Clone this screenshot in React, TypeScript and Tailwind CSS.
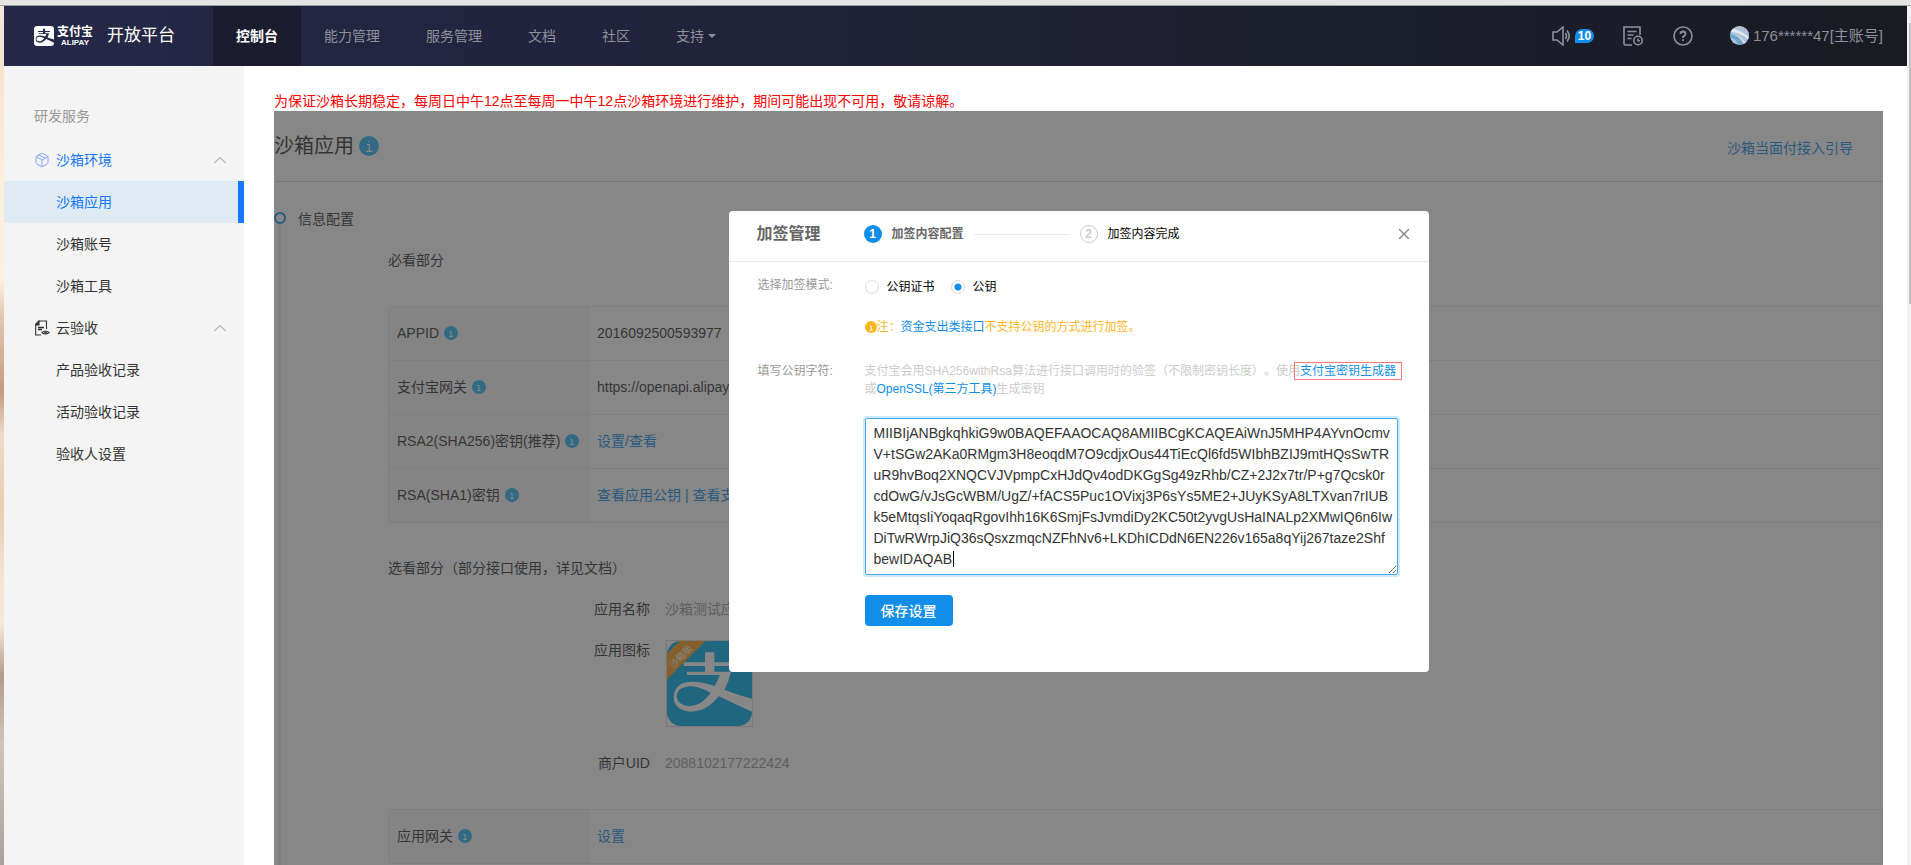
import React, { useState } from 'react';
import { ChevronUp, Package, X } from 'lucide-react';

const DEFAULT_KEY = [
  'MIIBIjANBgkqhkiG9w0BAQEFAAOCAQ8AMIIBCgKCAQEAiWnJ5MHP4AYvnOcmv',
  'V+tSGw2AKa0RMgm3H8eoqdM7O9cdjxOus44TiEcQl6fd5WIbhBZIJ9mtHQsSwTR',
  'uR9hvBoq2XNQCVJVpmpCxHJdQv4odDKGgSg49zRhb/CZ+2J2x7tr/P+g7Qcsk0r',
  'cdOwG/vJsGcWBM/UgZ/+fACS5Puc1OVixj3P6sYs5ME2+JUyKSyA8LTXvan7rIUB',
  'k5eMtqsIiYoqaqRgovIhh16K6SmjFsJvmdiDy2KC50t2yvgUsHaINALp2XMwIQ6n6Iw',
  'DiTwRWrpJiQ36sQsxzmqcNZFhNv6+LKDhICDdN6EN226v165a8qYij267taze2Shf',
  'bewIDAQAB',
].join('\n');

const NAV_ITEMS = ['能力管理', '服务管理', '文档', '社区'];

interface AlipayMarkProps {
  className?: string;
  background: string;
  mark: string;
  children?: React.ReactNode;
}

const AlipayMark: React.FC<AlipayMarkProps> = ({ className, background, mark, children }) => (
  <svg viewBox="0 0 255 255" className={className} aria-hidden="true">
    <rect width="255" height="255" rx="42" className={background} />
    <g className={mark}>
      <path d="M114 34h28v30h62v11h-62v17h50q-6 28-20 54q38 15 83 27v39q-50-22-100-46q-36 46-83 46q-52-2-52-46q4-44 55-44q31 0 68 13q10-18 15-33H60V92h54V75H50V64h64z" />
    </g>
    <path d="M131 156q-32-20-62-20q-38 2-40 30q2 28 38 30q34 0 64-40z" className={background} />
    {children}
  </svg>
);

const InfoIcon: React.FC = () => (
  <span className="inline-flex h-3.5 w-3.5 shrink-0 items-center justify-center rounded-full bg-[#2db7f5]">
    <svg viewBox="0 0 14 14" className="h-3.5 w-3.5" fill="none" stroke="white" strokeWidth="1" aria-hidden="true">
      <path d="M5.500 5.500h1.500v4.500M5.300 10.500h3.600" />
    </svg>
  </span>
);

const Header: React.FC = () => (
  <header className="flex h-[60px] shrink-0 items-center bg-linear-to-r from-[#252848] via-[#1f2135] to-[#181b21] text-sm text-[#8f909c]">
    <a href="#" className="flex w-[209px] shrink-0 items-center pl-[30px] whitespace-nowrap text-white">
      <AlipayMark className="h-5 w-5" background="fill-white" mark="fill-[#252848]" />
      <span className="ml-[3px] flex w-9 flex-col items-center">
        <span className="text-[12px] leading-[13px] font-bold">支付宝</span>
        <span className="text-[8px] leading-[7px] font-bold">ALIPAY</span>
      </span>
      <span className="ml-3.5 text-[17px] leading-6">开放平台</span>
    </a>
    <nav className="flex h-full items-center">
      <a href="#" className="flex h-full items-center bg-[#1b1d2f] px-[23px] font-bold text-white">控制台</a>
      {NAV_ITEMS.map((item) => (
        <a key={item} href="#" className="px-[23px]">{item}</a>
      ))}
      <button className="flex items-center gap-1 px-[23px]">
        支持
        <svg viewBox="0 0 8 4" className="h-1 w-2 fill-current" aria-hidden="true"><path d="M0 0h8L4 4z" /></svg>
      </button>
    </nav>
    <div className="ml-auto flex items-center pr-6">
      <button className="flex items-center gap-[3px]" aria-label="消息">
        <svg viewBox="0 0 20 20" className="h-5 w-5" fill="none" stroke="currentColor" strokeWidth="1.6" aria-hidden="true">
          <path d="M1 6h4l6-5v18l-6-5H1zM13.500 7q2 3 0 6M15 4.500q4.500 5.500 0 11" />
        </svg>
        <span className="flex h-3.5 w-[19px] items-center justify-center rounded-full rounded-bl-none bg-[#108ee9] text-xs font-bold text-white">10</span>
      </button>
      <button className="ml-[29px]" aria-label="工单">
        <svg viewBox="0 0 20 20" className="h-5 w-5" fill="none" stroke="currentColor" strokeWidth="1.6" aria-hidden="true">
          <path d="M9 19H2.500Q1 19 1 17.500V1h16v8M4.500 5.500h9M4.500 9h6M4.500 12.500h4" />
          <circle cx="15" cy="14.500" r="4.200" />
          <path d="M15 12.500v2.200h2" />
        </svg>
      </button>
      <button className="ml-[30px]" aria-label="帮助">
        <svg viewBox="0 0 20 20" className="h-5 w-5" fill="none" stroke="currentColor" strokeWidth="1.6" aria-hidden="true">
          <circle cx="10" cy="10" r="9" />
          <path d="M7.500 8q0-2.500 2.500-2.500T12.500 8q0 1.200-1.300 1.900T10 12M10 13.300v1.700" strokeWidth="1.800" />
        </svg>
      </button>
      <a href="#" className="ml-[37px] flex items-center gap-1 text-[15px]">
        <svg viewBox="0 0 19 19" className="h-[19px] w-[19px]" aria-hidden="true">
          <clipPath id="avatar"><circle cx="9.500" cy="9.500" r="9.500" /></clipPath>
          <g clipPath="url(#avatar)">
            <path className="fill-[#a9c4dc]" d="M0 0h19v19H0z" />
            <path className="fill-[#e3e8ee]" d="M0 2q9 1 19 9v3Q10 6 0 6z" />
            <path className="fill-[#c9b3c4]" d="M6 0q8 2 13 8V5Q14 1 10 0z" />
            <path className="fill-[#6fa3c8]" d="M0 8q8 0 14 11H8Q6 12 0 12z" />
            <path className="fill-[#d9dbe6]" d="M3 8q8 1 13 9l-2 1Q10 10 3 8z" />
          </g>
        </svg>
        176******47[主账号]
      </a>
    </div>
  </header>
);

interface SideGroupProps {
  title: string;
  icon: React.ReactNode;
  items: string[];
  active?: string;
}

const SideGroup: React.FC<SideGroupProps> = ({ title, icon, items, active }) => (
  <div>
    <button className={`flex h-[42px] w-full items-center pr-3.5 pl-[30px] ${active ? 'text-[#1677ff]' : 'text-[#333]'}`}>
      {icon}
      <span className="ml-1.5">{title}</span>
      <ChevronUp className="ml-auto h-5 w-5 text-[#b8b8c4]" strokeWidth={1.5} />
    </button>
    <ul>
      {items.map((item) => (
        <li key={item}>
          <a
            href="#"
            className={`flex h-[42px] items-center pl-[52px] ${item === active ? 'border-r-6 border-[#1677ff] bg-[#deebf5] text-[#1677ff]' : 'text-[#333]'}`}
          >
            {item}
          </a>
        </li>
      ))}
    </ul>
  </div>
);

const Sidebar: React.FC = () => (
  <aside className="w-60 shrink-0 bg-[#f4f4f4] pt-10 text-sm">
    <h2 className="mb-[13px] pl-[30px] leading-5 text-[#999]">研发服务</h2>
    <SideGroup
      title="沙箱环境"
      icon={<Package className="h-4 w-4 text-[#85a5ff]" strokeWidth={1.5} />}
      items={['沙箱应用', '沙箱账号', '沙箱工具']}
      active="沙箱应用"
    />
    <SideGroup
      title="云验收"
      icon={
        <svg viewBox="0 0 16 16" className="h-4 w-4" fill="none" stroke="currentColor" strokeWidth="1.1" aria-hidden="true">
          <path d="M12.500 9V1H5L1.700 4.500V15H7" />
          <path d="M2 5V4l3-3v4z" fill="currentColor" />
          <path d="M4 7.500h6M4 9.500h4" strokeWidth="1.600" />
          <path d="M8 12.500q3.300-3 7 0q-3.700 3-7 0z" />
          <circle cx="11.500" cy="12.500" r="0.800" />
        </svg>
      }
      items={['产品验收记录', '活动验收记录', '验收人设置']}
    />
  </aside>
);

interface ConfigRow {
  label: string;
  value: React.ReactNode;
}

const ConfigTable: React.FC<{ rows: ConfigRow[] }> = ({ rows }) => (
  <div className="mt-9 overflow-hidden rounded border-x border-t border-[#e9e9e9]">
    <table className="w-full table-fixed border-separate border-spacing-0 text-left">
      <tbody>
        {rows.map((row) => (
          <tr key={row.label}>
            <th className="h-[54px] w-[200px] border-r border-b border-[#e9e9e9] bg-[#f7f7f9] pt-0 pr-0 pb-0.5 pl-2 font-normal whitespace-nowrap">
              <span className="flex items-center gap-[5px]">{row.label}<InfoIcon /></span>
            </th>
            <td className="h-[54px] border-b border-[#e9e9e9] pt-0 pb-0.5 pl-2">{row.value}</td>
          </tr>
        ))}
      </tbody>
    </table>
  </div>
);

const SandboxApp: React.FC = () => (
  <>
    <div className="flex h-[71px] items-center border-b border-[#d9d9d9]">
      <h1 className="text-xl">沙箱应用</h1>
      <span className="ml-[5px] flex h-5 w-5 items-center justify-center rounded-full bg-[#2db7f5]">
        <svg viewBox="0 0 20 20" className="h-5 w-5" fill="none" stroke="white" strokeWidth="1.2" aria-hidden="true">
          <path d="M8 8.500h2.300v6.500M7.300 15.400h6M9.200 5.500h1.400" />
        </svg>
      </span>
      <a href="#" className="mt-1 mr-[30px] ml-auto text-sm text-[#108ee9]">沙箱当面付接入引导</a>
    </div>
    <div className="flex pt-[27px] text-sm leading-5">
      <div className="flex w-3 shrink-0 flex-col items-center">
        <span className="mt-[3px] h-3 w-3 rounded-full border-2 border-[#108ee9]" />
        <span className="w-0.5 flex-1 bg-[#e9e9e9]" />
      </div>
      <div className="ml-3 min-w-0 flex-1 pb-6">
        <h2>信息配置</h2>
        <div className="pl-[90px]">
          <h3 className="mt-[21px]">必看部分</h3>
          <ConfigTable
            rows={[
              { label: 'APPID', value: '2016092500593977' },
              { label: '支付宝网关', value: 'https://openapi.alipaydev.com/gateway.do' },
              { label: 'RSA2(SHA256)密钥(推荐)', value: <a href="#" className="text-[#108ee9]">设置/查看</a> },
              {
                label: 'RSA(SHA1)密钥',
                value: (
                  <span className="text-[#108ee9]">
                    <a href="#">查看应用公钥</a> | <a href="#">查看支付宝公钥</a>
                  </span>
                ),
              },
            ]}
          />
          <h3 className="mt-[35px]">选看部分（部分接口使用，详见文档）</h3>
          <dl className="mt-[21px] grid grid-cols-[262px_1fr] gap-x-[15px]">
            <dt className="mb-[21px] text-right">应用名称</dt>
            <dd className="text-[#999]">沙箱测试应用</dd>
            <dt className="text-right">应用图标</dt>
            <dd className="mb-[26px]">
              <div className="ml-px h-[87px] w-[87px] border border-[#d9d9d9]">
                <AlipayMark className="h-full w-full" background="fill-[#02acea]" mark="fill-white">
                  <path d="M38 0h77L0 115V38z" className="fill-[#fa9f1f]" />
                  <text x="0" y="0" transform="translate(20 82) rotate(-45)" className="fill-white text-[27px]">沙箱版</text>
                </AlipayMark>
              </div>
            </dd>
            <dt className="text-right">商户UID</dt>
            <dd className="text-[#999]">2088102177222424</dd>
          </dl>
          <ConfigTable rows={[{ label: '应用网关', value: <a href="#" className="text-[#108ee9]">设置</a> }]} />
        </div>
      </div>
    </div>
  </>
);

const radioClass =
  'h-3.5 w-3.5 appearance-none rounded-full border border-[#d9d9d9] bg-white checked:bg-[radial-gradient(circle,#108ee9_3px,white_4px)]';

const SignModal: React.FC = () => {
  const [mode, setMode] = useState('key');
  const [publicKey, setPublicKey] = useState(DEFAULT_KEY);

  return (
    <div role="dialog" aria-labelledby="sign-title" className="w-[700px] rounded bg-white text-xs text-black">
      <div className="flex h-[51px] items-center border-b border-[#e9e9e9] px-7 pb-1">
        <h2 id="sign-title" className="text-base font-bold text-[#666]">加签管理</h2>
        <ol className="ml-[43px] flex items-center">
          <li className="flex items-center font-bold text-[#666]">
            <span className="mr-2.5 flex h-[18px] w-[18px] items-center justify-center rounded-full bg-[#108ee9] text-white">1</span>
            加签内容配置
          </li>
          <li className="flex items-center">
            <span className="mx-2.5 h-px w-24 bg-[#e9e9e9]" />
            <span className="mr-2.5 flex h-[18px] w-[18px] items-center justify-center rounded-full border border-[#ccc] font-bold text-[#ccc]">2</span>
            加签内容完成
          </li>
        </ol>
        <button className="-mr-3 ml-auto text-[#888]" aria-label="关闭">
          <X className="h-[18px] w-[18px]" strokeWidth={1.8} />
        </button>
      </div>

      <div className="grid grid-cols-[107px_1fr] pt-[15px] pr-[31px] pb-[46px] pl-[29px] leading-[18px]">
        <span className="leading-4 text-[#999]">选择加签模式:</span>
        <div className="flex h-5 items-center">
          <label className="flex items-center gap-2">
            <input type="radio" name="mode" className={radioClass} checked={mode === 'cert'} onChange={() => setMode('cert')} />
            公钥证书
          </label>
          <label className="ml-4 flex items-center gap-2">
            <input type="radio" name="mode" className={radioClass} checked={mode === 'key'} onChange={() => setMode('key')} />
            公钥
          </label>
        </div>

        <p className="col-start-2 mt-[21px] flex items-center text-[#ffb51e]">
          <svg viewBox="0 0 12 12" className="h-3 w-3" aria-hidden="true">
            <circle cx="6" cy="6" r="6" className="fill-[#ffb51e]" />
            <path d="M5 5h1.200v4M4.700 9.200h3" fill="none" stroke="white" strokeWidth="1" />
          </svg>
          注：<a href="#" className="text-[#108ee9]">资金支出类接口</a>不支持公钥的方式进行加签。
        </p>

        <label htmlFor="public-key" className="mt-[26px] text-[#999]">填写公钥字符:</label>
        <div className="mt-[26px]">
          <p className="text-[#ccc]">
            支付宝会用SHA256withRsa算法进行接口调用时的验签（不限制密钥长度）。使用
            <a href="#" className="relative whitespace-nowrap text-[#108ee9]">
              支付宝密钥生成器
              <span className="absolute -inset-x-1.5 -inset-y-0.5 border border-[#f77]" />
            </a>
            <br />
            或<a href="#" className="text-[#108ee9]">OpenSSL(第三方工具)</a>生成密钥
          </p>
          <div className="relative mt-5">
            <textarea
              id="public-key"
              rows={7}
              value={publicKey}
              onChange={(e) => setPublicKey(e.target.value)}
              className="block h-[157px] w-full resize-y overflow-hidden rounded-xs border border-[#49a9ee] py-1 pr-0 pl-2 text-sm leading-[21px] whitespace-pre text-[#333] shadow-[0_0_0_2px_rgba(16,142,233,0.2)] outline-none"
            />
            {/* text cursor */}
            <span className="pointer-events-none absolute top-[133px] left-[88px] h-4 w-px bg-black" />
          </div>
          <button className="mt-5 h-[31px] rounded bg-[#108ee9] px-4 text-sm font-medium text-white">保存设置</button>
        </div>
      </div>
    </div>
  );
};

const App: React.FC = () => {
  return (
    <div className="flex h-screen flex-col overflow-hidden bg-white font-['Liberation_Sans','Noto_Sans_CJK_SC',sans-serif] [text-spacing-trim:space-all]">
      <div className="h-1.5 shrink-0 border-b border-[#9aa09a] bg-[#e4e4e4]" />
      <div className="flex min-h-0 flex-1">
        <div className="w-1 shrink-0 bg-[linear-gradient(#f5e6dc,#f8e2cc_8%,#fdeedd_20%,#fdf0de_32%,#e3c8b0_36%,#c49a80_45%,#f0dcc8_50%,#e8cdb0_58%,#f3e2d0_66%,#f5e8d8_72%,#b49c8c_78%,#cfc5bb_86%,#a9a09c)]" />
        <div className="flex min-w-0 flex-1 flex-col">
          <Header />
          <div className="flex min-h-0 flex-1">
            <Sidebar />
            <main className="flex min-w-0 flex-1 flex-col overflow-hidden pt-[25px] pr-6 pl-[30px]">
              <p className="text-sm leading-5 text-[#f00]">
                为保证沙箱长期稳定，每周日中午12点至每周一中午12点沙箱环境进行维护，期间可能出现不可用，敬请谅解。
              </p>
              <section className="relative shrink-0 text-[#333]">
                <SandboxApp />
                <div className="absolute inset-0 flex items-start justify-center bg-[#373737]/60 pt-[100px]">
                  <SignModal />
                </div>
              </section>
            </main>
          </div>
        </div>
        <div className="flex w-1 shrink-0 flex-col items-end bg-[#f1f1f1] pt-[17px]">
          <div className="h-1/3 w-0.5 bg-[#c1c1c1]" />
        </div>
      </div>
    </div>
  );
};

export default App;
